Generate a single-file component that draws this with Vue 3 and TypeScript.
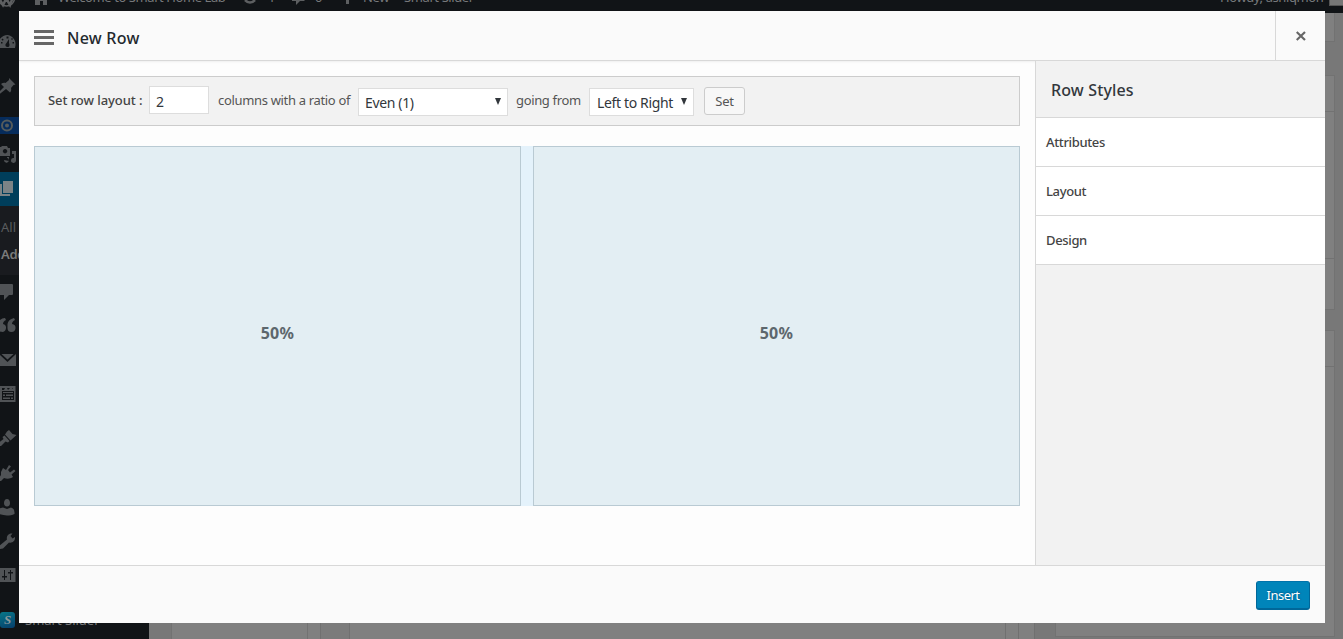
<script setup lang="ts">
import { ref } from 'vue'

interface MenuIcon { id: string; y: number; h: number; paths: string[] }

const columns = ref<string>('2')
const cells = ['50%', '50%']
const sections = ['Attributes', 'Layout', 'Design']

const menu: MenuIcon[] = [
  { id: 'dashboard', y: 22, h: 14, paths: ['M-1 13V5C1 2 4 0 7.500 0S15 4 15.500 8V10L15 13ZM6.500 1.500v2h2v-2ZM2.500 3.500l-1 1 1.200 1.200 1-1ZM12 3l-1 1 1 1 1-1ZM12.500 7v1.500h1.500v-1.500ZM1 7v1.500h1.500v-1.500ZM9 4L6.500 8C4.500 9.500 5.500 12 7.500 12s2.500-2 1.500-4Z'] },
  { id: 'pin', y: 65, h: 17, paths: ['M9 0L15.500 6.500 13.500 7 11 10C11.500 12 11 14 10 14.500L6 11-1 16.500V14L4 9 1 6C2.500 5 4 4.500 5.500 5L9 2Z'] },
  { id: 'media', y: 132, h: 20, paths: ['M-1 2H1L2 1H7L8 3H10V11H-1ZM5 4a2.200 2.200 0 1 0 .1 0Z', 'M10 6H16V15.500a2.500 2.500 0 1 1-2-2.500V9H12V6Z', 'M4 15a2.500 2.500 0 1 0 3-2.300V12H9V16'] },
  { id: 'pages', y: 167, h: 18, paths: ['M3 1H13V13H3Z', 'M-1 4H2V14H10V16H-1Z'] },
  { id: 'comments', y: 271, h: 17, paths: ['M0 0H12Q13 0 13 1V10Q13 11 12 11H9L4 16V11H-1V0Z'] },
  { id: 'quote', y: 304, h: 15, paths: ['M5 1L6 3C4 4 3 5 3 7A4 4 0 1 1-2 11V6C-1 3 2 1 5 1Z', 'M14 1L15 3C13 4 12 5 12 7A4 4 0 1 1 7.500 11V7C8 4 10 2 14 1Z'] },
  { id: 'mail', y: 341, h: 13, paths: ['M1.500 0H13.500L7.500 5.500Z', 'M-1 0L7.500 8 16 0V12H-1Z'] },
  { id: 'forms', y: 373, h: 16, paths: ['M0 0H15.500V16H0ZM2 2V4H4L5 2H7L8 4L10 2H12L13 3V2ZM2 5V14H14V5ZM3 6H13V7H3ZM3 8.500H5V10H3ZM6 8.500H13V10H6ZM3 11.500H10V13H3ZM11 11.500H13V13H11Z'] },
  { id: 'brush', y: 417, h: 17, paths: ['M7 1.500L9 0 12.500 4 16.500 5 10.500 10.500 5 4.500Z', 'M4.500 5.500L9.500 11 8 12.500 5.500 11.500 1 16H-2V13.500L3.500 9 2.500 7Z'] },
  { id: 'plugin', y: 452, h: 17, paths: ['M9 0L11 1.500 8 5 10 7.500 14 4.500 15.500 6 11.500 9.500 13 12C10 14 7 14 4 13L1 16H-1V13L1 10 1 7 3 3 6 5Z'] },
  { id: 'users', y: 486, h: 17, paths: ['M7 0C9 0 10 2 10 4S9 7.500 7 7.500 4 6 4 4 5 0 7 0Z', 'M-1 15V9.500L3 8.500 7 10 11 8.500Q15 9.500 14.500 15C10 17 4 17-1 15Z'] },
  { id: 'tools', y: 520, h: 17, paths: ['M15 4C15.500 8 12 10.500 9 9.500L3 15.500 0 16-1 13 7 6.500C6 3 9 0 12.500 .5L10.500 3 12.500 5.500Z'] },
  { id: 'settings', y: 555, h: 15, paths: ['M0 0H15.500V14H0ZM4 2V8H2V9.500H4V12H5V9.500H7V8H5V2ZM10 2V4H8V5.500H10V12H11V5.500H13V4H11V2Z'] },
]
</script>

<template>
  <div class="screen">
    <div class="admin">
      <header class="bar">
        <svg class="wp" viewBox="0 0 20 13" width="20" height="13"><circle cx="6.500" cy="-2" r="8" fill="none" stroke="#5d5f61" stroke-width="1.500" /><path d="M-1-2L3 5 6-1M6-2L10 5 13-3" fill="none" stroke="#5d5f61" stroke-width="2.500" /></svg>
        <svg class="home" viewBox="0 0 14 5" width="14" height="5"><path d="M0 0H12V5H8V1H5V5H0Z" fill="#5d5f61" /></svg>
        <span class="t1">Welcome to Smart Home Lab</span>
        <svg class="upd" viewBox="0 0 14 5" width="14" height="5"><path d="M1 0Q6 5 11 0" fill="none" stroke="#5d5f61" stroke-width="2.500" /></svg>
        <span class="t2">1</span>
        <svg class="cmt" viewBox="0 0 14 6" width="14" height="6"><path d="M0 0H13L12 1H8L4 5V1H0Z" fill="#5d5f61" /></svg>
        <span class="t3">0</span>
        <span class="plus"></span>
        <span class="t4">New</span>
        <span class="t5">Smart Slider</span>
        <span class="t6">Howdy, ashiqmon</span>
        <span class="avatar"></span>
      </header>
      <nav class="side">
        <span class="flag"><svg viewBox="0 0 19 17" width="19" height="17"><circle cx="7" cy="8.500" r="5" fill="none" stroke="#555b5c" stroke-width="2" /><circle cx="7" cy="8.500" r="2" fill="#555b5c" /></svg></span>
        <span class="current"></span>
        <span class="sub"><span>All</span><b>Add</b></span>
        <svg v-for="m in menu" :key="m.id" class="mi" :style="{ top: m.y + 'px' }" width="18" :height="m.h + 3" :viewBox="`0 0 18 ${m.h + 3}`"><path v-for="(p, i) in m.paths" :key="i" :d="p" :class="{ lit: m.id === 'pages' }" /></svg>
        <span class="ss">S</span><span class="sslabel">Smart Slider</span>
      </nav>
      <main class="under">
        <div class="c1"></div><div class="c2"></div>
        <div class="c3"><i></i><i></i><i></i><i></i></div>
        <aside class="right"><div class="r1"></div><div class="r2"><i></i><i></i></div><div class="r3"><i></i></div></aside>
      </main>
    </div>

    <section class="modal">
      <header class="head">
        <span class="burger"><i></i><i></i><i></i></span>
        <h1>New Row</h1>
        <button class="close"><svg width="10" height="10" viewBox="0 0 10 10"><path d="M.7 1L9 9M9 1L.7 9" stroke="#666" stroke-width="2.200" /></svg></button>
      </header>
      <div class="body">
        <div class="canvas">
          <div class="form">
            <b class="f1">Set row layout :</b>
            <input v-model="columns" />
            <span class="f2">columns with a ratio of</span>
            <span class="select s1"><span>Even (1)</span><i></i></span>
            <span class="f3">going from</span>
            <span class="select s2"><span>Left to Right</span><i></i></span>
            <button class="set"><span>Set</span></button>
          </div>
          <div class="cells"><div v-for="(c, i) in cells" :key="i" class="cell"><span>{{ c }}</span></div></div>
        </div>
        <aside class="styles">
          <h2><span>Row Styles</span></h2>
          <div v-for="s in sections" :key="s" class="sec"><span>{{ s }}</span></div>
        </aside>
      </div>
      <footer class="foot"><button class="insert"><span>Insert</span></button></footer>
    </section>
  </div>
</template>

<style>
body { margin: 0; overflow: hidden; }
</style>

<style scoped>
* { box-sizing: border-box; }
.screen { position: relative; width: 1343px; height: 639px; overflow: hidden; background: #787878; font: 13px/20px "Noto Sans", "Open Sans", sans-serif; color: #444; }
i { display: block; font-style: normal; }
button, input { font: inherit; margin: 0; padding: 0; }
.admin { display: grid; grid-template: 13px 626px / 149px 1fr; }
.bar { grid-column: 1 / 3; background: #111417; position: relative; overflow: hidden; color: #77797b; }
.bar > * { position: absolute; top: 0; white-space: nowrap; }
.bar > span { top: -13px; }
.bar .wp { left: 0; }
.bar .home { left: 35px; }
.bar .t1 { left: 58px; letter-spacing: -.42px; }
.bar .upd { left: 244px; }
.bar .t2 { left: 268px; }
.bar .cmt { left: 292px; }
.bar .t3 { left: 315px; }
.bar .plus { left: 346px; top: 0; width: 3px; height: 4px; background: #5d5f61; }
.bar .t4 { left: 363px; letter-spacing: -.3px; }
.bar .t5 { left: 404px; letter-spacing: -.4px; }
.bar .t6 { left: 1220px; letter-spacing: -.4px; }
.bar .avatar { left: 1329px; top: -8px; width: 16px; height: 14px; background: #777; border: 1px solid #555; }
.side { background: #111417; position: relative; overflow: hidden; }
.side > * { position: absolute; left: 0; }
.flag { top: 104px; width: 19px; height: 17px; background: #062c5c; }
.flag svg { display: block; }
.current { top: 159px; width: 149px; height: 34px; background: #003e5b; }
.sub { top: 193px; width: 149px; height: 69px; background: #191b1f; color: #595c5e; padding: 11px 0 0 1px; display: flex; flex-direction: column; gap: 7px; }
.sub b { color: #7b7b7b; font-weight: 600; letter-spacing: -.3px; }
.mi path { fill: #505356; fill-rule: evenodd; }
.mi path.lit { fill: #7c8386; }
.ss { top: 599px; width: 15px; height: 16px; border-radius: 3px; background: linear-gradient(160deg, #087889, #063d6b); color: #8b9a9c; font: italic bold 13px/16px "Liberation Serif", serif; text-align: center; }
.side .sslabel { left: 25px; top: 597px; color: #77797b; white-space: nowrap; }
.under { display: flex; background: #787878; height: 626px; }
.c1 { margin-left: 22px; width: 137px; background: #808080; border: solid #727272; border-width: 0 1px; }
.c2 { width: 12px; background: #808080; }
.c3 { width: 715px; display: flex; background: #808080; border: solid #707070; border-width: 0 1px; }
.c3 i { border-right: 1px solid #707070; }
.c3 i:nth-child(1) { width: 29px; background: #7b7b7b; }
.c3 i:nth-child(2) { width: 656px; }
.c3 i:nth-child(3) { width: 13px; }
.c3 i:nth-child(4) { flex: 1; border: 0; }
.right { width: 280px; margin-left: 20px; }
.r1, .r2, .r3 { background: #808080; border: 1px solid #727272; }
.r1 { height: 29px; border-top: 0; }
.r2 { height: 235px; margin-top: 33px; }
.r2 i { border-bottom: 1px solid #727272; height: 36px; }
.r2 i + i { height: 147px; }
.r3 { height: 307px; margin-top: 20px; }
.r3 i { border-bottom: 1px solid #727272; height: 36px; }

.modal { position: absolute; left: 19px; top: 11px; width: 1306px; height: 612px; display: flex; flex-direction: column; background: #fdfdfd; }
.head { height: 50px; flex: none; background: #fafafa; border-bottom: 1px solid #d8d8d8; display: flex; align-items: center; padding-left: 15px; box-shadow: 0 1px 2px rgba(0,0,0,.06); }
.burger { display: flex; flex-direction: column; gap: 3px; width: 20px; margin-right: 13px; padding-top: 3px; }
.burger i { height: 3px; background: #666; }
h1 { margin: 0; font-size: 16px; line-height: 24px; font-weight: 500; letter-spacing: .25px; color: #23282d; padding-top: 4px; flex: 1; }
.close { width: 50px; height: 49px; border: 0; border-left: 1px solid #d8d8d8; background: none; display: flex; align-items: center; justify-content: center; }
.body { display: flex; height: 504px; }
.canvas { width: 1016px; padding: 15px; }
.form { height: 50px; background: #f2f2f2; border: 1px solid #ccc; display: flex; padding-left: 13px; color: #555; white-space: nowrap; }
.form > * { flex: none; }
.f1 { width: 101px; padding-top: 13px; font-weight: 500; letter-spacing: -.07px; color: #444; }
input { width: 60px; height: 28px; margin-top: 9px; border: 1px solid #ddd; padding: 2px 6px 0; color: #32373c; font-size: 14px; }
.f2 { width: 140px; margin-left: 9px; padding-top: 13px; letter-spacing: -.33px; }
.select { height: 28px; margin-top: 11px; background: #fff; border: 1px solid #ddd; display: flex; justify-content: space-between; padding: 4px 6px 0; font-size: 14px; line-height: 20px; letter-spacing: -.35px; color: #32373c; }
.select i { border: solid transparent; border-width: 7px 3px 0; border-top-color: #32373c; height: 0; margin-top: 5px; }
.s1 { width: 150px; }
.s2 { width: 105px; padding-left: 7px; }
.f3 { width: 73px; margin-left: 8px; padding-top: 13px; letter-spacing: -.35px; }
.set { width: 41px; height: 28px; margin: 10px 0 0 10px; border: 1px solid #ccc; border-radius: 3px; background: #f7f7f7; color: #555; letter-spacing: -.2px; }
.cells { margin-top: 20px; height: 360px; display: flex; gap: 12px; background: #e4f2fb; }
.cell { flex: 1; background: #e3eef3; border: 1px solid #b9cad3; display: flex; align-items: center; justify-content: center; padding-top: 14px; font-size: 16px; font-weight: 700; letter-spacing: .3px; color: #5d676d; }
.styles { flex: 1; background: #f2f2f2; border-left: 1px solid #d8d8d8; }
h2 { margin: 0; height: 57px; border-bottom: 1px solid #d8d8d8; padding: 19px 15px 0; font-size: 16px; line-height: 20px; font-weight: 500; letter-spacing: .15px; color: #32373c; }
.sec { height: 49px; background: #fff; border-bottom: 1px solid #d8d8d8; padding: 14px 10px 0; font-weight: 500; letter-spacing: -.35px; color: #444; }
.foot { height: 58px; border-top: 1px solid #d8d8d8; background: #fafafa; display: flex; justify-content: flex-end; padding: 15px 15px 0 0; }
.insert { width: 54px; height: 29px; border: 1px solid #006799; border-top-color: #0073aa; border-bottom-width: 2px; border-radius: 3px; background: #0085ba; color: #fff; letter-spacing: -.5px; text-shadow: 0 -1px 1px #006799, 1px 0 1px #006799; }
</style>
